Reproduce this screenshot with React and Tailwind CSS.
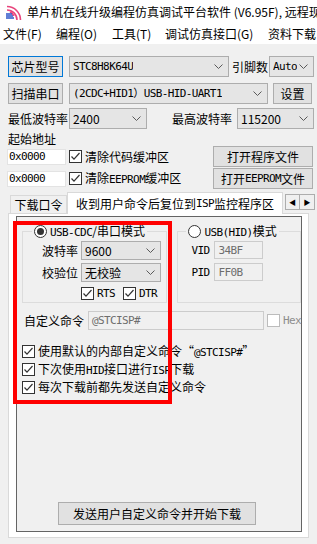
import React from "react";

const CN = "font-['Noto_Sans_CJK_SC','Noto_Sans',sans-serif]";
const MONO = "font-['DejaVu_Sans_Mono','Noto_Sans_CJK_SC',monospace] text-[11px] tracking-[-0.6px]";

function Chevron() {
  return (
    <svg width="9" height="5" viewBox="0 0 9 5" className="shrink-0">
      <path d="M0.5 0.5 L4.5 4.5 L8.5 0.5" fill="none" stroke="#5a5a5a" strokeWidth="1" />
    </svg>
  );
}

function Combo({ className, children }) {
  return (
    <div className={`flex items-center justify-between border border-[#adadad] bg-[#e5e5e5] pl-[3px] pr-[5px] ${className}`}>
      <span className="overflow-hidden whitespace-nowrap leading-[16px]">{children}</span>
      <Chevron />
    </div>
  );
}

function Btn({ className, children }) {
  return (
    <div className={`flex items-center justify-center whitespace-nowrap border bg-[#e1e1e1] ${className}`}>
      {children}
    </div>
  );
}

function Check({ checked = true, dim = false }) {
  return (
    <span
      className={`inline-flex h-[13px] w-[13px] shrink-0 items-center justify-center border bg-white ${
        dim ? "border-[#bcbcbc]" : "border-[#333333]"
      }`}
    >
      {checked && (
        <svg width="11" height="11" viewBox="0 0 11 11">
          <path d="M1.5 5.5 L4 8.2 L9.5 2" fill="none" stroke="#333" strokeWidth="1.2" />
        </svg>
      )}
    </span>
  );
}

function Radio({ on }) {
  return (
    <span className="inline-flex h-[13px] w-[13px] shrink-0 items-center justify-center rounded-full border border-[#333333] bg-white">
      {on && <span className="h-[7px] w-[7px] rounded-full bg-[#333333]" />}
    </span>
  );
}

function Logo() {
  return (
    <svg width="21" height="15" viewBox="0 0 21 15">
      <path d="M2 5 A10 10 0 0 1 12 15" fill="none" stroke="#e8457c" strokeWidth="1.6" />
      <path d="M2 1.5 A13.5 13.5 0 0 1 15.5 15" fill="none" stroke="#e8457c" strokeWidth="1.6" />
      <path d="M5 7 A8 8 0 0 1 9 11" fill="none" stroke="#e8457c" strokeWidth="1.6" />
      <path d="M1 9 L7 9 M1 11 L8 11 M1 13 L9 13" stroke="#2c56c9" strokeWidth="1.4" />
    </svg>
  );
}

export default function App() {
  return (
    <div className={`relative h-[544px] w-[317px] overflow-hidden bg-[#f0f0f0] text-[12px] leading-none text-black ${CN}`}>
      {/* title bar */}
      <div className="flex h-[24px] items-center whitespace-nowrap bg-white">
        <span className="ml-[5px]">
          <Logo />
        </span>
        <span className="ml-[1px]">单片机在线升级编程仿真调试平台软件 (V6.95F), 远程现场在线升级</span>
      </div>

      {/* menu */}
      <div className="flex h-[20px] items-center whitespace-nowrap bg-white">
        <span className="ml-[3px] w-[53px]">文件(F)</span>
        <span className="w-[56px]">编程(O)</span>
        <span className="w-[53px]">工具(T)</span>
        <span className="w-[103px]">调试仿真接口(G)</span>
        <span>资料下载</span>
      </div>

      {/* row 1 */}
      <div className="mt-[12px] flex h-[21px] items-center whitespace-nowrap pl-[8px]">
        <Btn className="h-[21px] w-[55px] border-[#0078d7]">芯片型号</Btn>
        <Combo className={`ml-[6px] h-[21px] w-[160px] ${MONO}`}>STC8H8K64U</Combo>
        <span className="ml-[3px] w-[36px]">引脚数</span>
        <Combo className={`ml-[1px] h-[21px] w-[45px] ${MONO}`}>Auto</Combo>
      </div>

      {/* row 2 */}
      <div className="mt-[6px] flex h-[21px] items-center whitespace-nowrap pl-[8px]">
        <Btn className="h-[21px] w-[55px] border-[#adadad]">扫描串口</Btn>
        <Combo className={`ml-[6px] h-[21px] w-[199px] ${MONO}`}>(2CDC+HID1）USB-HID-UART1</Combo>
        <Btn className="ml-[5px] h-[21px] w-[39px] border-[#adadad]">设置</Btn>
      </div>

      {/* row 3 */}
      <div className="mt-[4px] flex h-[21px] items-center whitespace-nowrap pl-[8px]">
        <span className="w-[61px]">最低波特率</span>
        <Combo className="h-[21px] w-[78px]">2400</Combo>
        <span className="ml-[25px] w-[65px]">最高波特率</span>
        <Combo className="h-[21px] w-[77px]">115200</Combo>
      </div>

      {/* address */}
      <div className="mt-[2px] flex h-[15px] items-center pl-[8px]">起始地址</div>
      <div className="flex h-[21px] items-center whitespace-nowrap pl-[7px]">
        <div className={`flex h-[16px] w-[59px] items-center border border-[#e3e3e3] bg-white pl-[1px] ${MONO}`}>0x0000</div>
        <span className="ml-[3px]">
          <Check />
        </span>
        <span className="ml-[3px]">清除代码缓冲区</span>
        <Btn className="ml-auto mr-[4px] h-[21px] w-[100px] border-[#adadad]">打开程序文件</Btn>
      </div>
      <div className="mt-[1px] flex h-[21px] items-center whitespace-nowrap pl-[7px]">
        <div className={`flex h-[16px] w-[59px] items-center border border-[#e3e3e3] bg-white pl-[1px] ${MONO}`}>0x0000</div>
        <span className="ml-[3px]">
          <Check />
        </span>
        <span className="ml-[3px]">
          清除<span className={MONO}>EEPROM</span>缓冲区
        </span>
        <Btn className="ml-auto mr-[4px] h-[21px] w-[100px] border-[#adadad]">
          打开<span className={MONO}>EEPROM</span>文件
        </Btn>
      </div>

      {/* tabs */}
      <div className="mt-[3px] flex h-[21px] items-end whitespace-nowrap">
        <div className="ml-[10px] flex h-[18px] w-[57px] items-center justify-center border border-b-0 border-[#d9d9d9] bg-[#f0f0f0]">
          下载口令
        </div>
        <div className="relative z-10 -mb-[1px] flex h-[22px] w-[216px] items-center justify-center border border-b-0 border-[#d9d9d9] bg-white">
          收到用户命令后复位到<span className={MONO}>ISP</span>监控程序区
        </div>
        <div className="mb-[1px] ml-[2px] flex self-center">
          <span className="flex h-[16px] w-[15px] items-center justify-center border border-[#adadad] bg-[#f0f0f0] text-[7px]">◀</span>
          <span className="flex h-[16px] w-[15px] items-center justify-center border border-l-0 border-[#adadad] bg-[#f0f0f0] text-[7px]">▶</span>
        </div>
      </div>

      {/* tab panel */}
      <div className="mx-[8px] h-[325px] border border-[#d9d9d9] bg-white pb-[5px] pl-[7px] pr-[6px] pt-[2px]">
        <div className="flex h-full flex-col whitespace-nowrap border border-[#646464] bg-[#f0f0f0]">
          <div className="flex">
            <fieldset className="ml-[5px] mt-[6px] w-[146px] border border-[#dcdcdc] pb-[2px]">
              <legend className="ml-[9px] flex items-center px-[2px]">
                <Radio on />
                <span className="ml-[3px] h-[16px] leading-[16px]">
                  <span className={MONO}>USB-CDC</span>/串口模式
                </span>
              </legend>
              <div className="mt-[2px] flex items-center">
                <span className="w-[55px] text-right">波特率</span>
                <Combo className="ml-[3px] h-[19px] w-[80px]">9600</Combo>
              </div>
              <div className="mt-[3px] flex items-center">
                <span className="w-[55px] text-right">校验位</span>
                <Combo className="ml-[3px] h-[19px] w-[80px]">无校验</Combo>
              </div>
              <div className="mt-[5px] flex h-[13px] items-center">
                <span className="ml-[58px]">
                  <Check />
                </span>
                <span className={`ml-[3px] w-[26px] ${MONO}`}>RTS</span>
                <Check />
                <span className={`ml-[3px] ${MONO}`}>DTR</span>
              </div>
            </fieldset>

            <fieldset className="ml-[10px] mt-[6px] w-[124px] border border-[#dcdcdc]">
              <legend className="ml-[8px] flex items-center px-[2px]">
                <Radio />
                <span className="ml-[3px] h-[16px] leading-[16px]">
                  <span className={MONO}>USB(HID)</span>模式
                </span>
              </legend>
              <div className="mt-[2px] flex items-center">
                <span className={`ml-[13px] w-[23px] ${MONO}`}>VID</span>
                <div className={`flex h-[18px] w-[49px] items-center border border-[#cccccc] pl-[3px] text-[#6d6d6d] ${MONO}`}>34BF</div>
              </div>
              <div className="mt-[4px] flex items-center">
                <span className={`ml-[13px] w-[23px] ${MONO}`}>PID</span>
                <div className={`flex h-[18px] w-[49px] items-center border border-[#cccccc] pl-[3px] text-[#6d6d6d] ${MONO}`}>FF0B</div>
              </div>
            </fieldset>
          </div>

          <div className="mt-[8px] flex h-[19px] items-center">
            <span className="ml-[7px] w-[65px]">自定义命令</span>
            <div className={`flex h-[19px] w-[179px] items-center border border-[#cccccc] pl-[3px] text-[#6d6d6d] ${MONO}`}>@STCISP#</div>
            <span className="ml-[3px]">
              <Check checked={false} dim />
            </span>
            <span className={`ml-[3px] text-[#8d8d8d] ${MONO}`}>Hex</span>
          </div>

          <div className="mt-[12px] flex h-[18px] items-center">
            <span className="ml-[5px]">
              <Check />
            </span>
            <span className="ml-[3px]">
              使用默认的内部自定义命令“<span className={MONO}>@STCISP#</span>”
            </span>
          </div>
          <div className="flex h-[18px] items-center">
            <span className="ml-[5px]">
              <Check />
            </span>
            <span className="ml-[3px]">
              下次使用<span className={MONO}>HID</span>接口进行<span className={MONO}>ISP</span>下载
            </span>
          </div>
          <div className="flex h-[18px] items-center">
            <span className="ml-[5px]">
              <Check />
            </span>
            <span className="ml-[3px]">每次下载前都先发送自定义命令</span>
          </div>

          <Btn className="mb-[6px] ml-[41px] mt-auto h-[23px] w-[198px] border-[#adadad]">发送用户自定义命令并开始下载</Btn>
        </div>
      </div>

      {/* red annotation */}
      <div className="pointer-events-none absolute left-[13px] top-[221px] h-[183px] w-[159px] border-4 border-[#ff0000]" />
    </div>
  );
}
